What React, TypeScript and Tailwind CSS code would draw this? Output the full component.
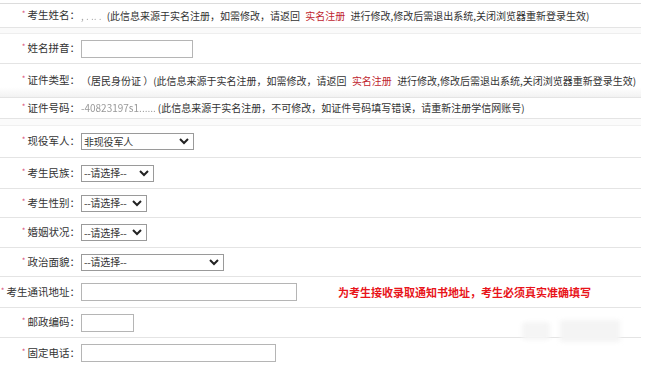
import type { ReactNode } from "react";

const FONT = '"Noto Sans CJK SC", "Noto Sans", sans-serif';

function Star() {
  return <span className="mr-[2px] text-[8px] text-[#d9537a] align-top">*</span>;
}

function Row({
  label,
  children,
  h,
  className = "",
}: {
  label: string;
  children?: ReactNode;
  h: string;
  className?: string;
}) {
  return (
    <div className={`flex items-center border-b border-[#e4e4e4] ${h} ${className}`}>
      <div className="w-[80px] shrink-0 whitespace-nowrap text-right text-[10.5px]">
        <Star />
        {label}：
      </div>
      <div className="flex flex-1 items-center whitespace-nowrap pl-[1px]">{children}</div>
    </div>
  );
}

function Chevron() {
  return (
    <svg viewBox="0 0 10 7" className="h-[7px] w-[10px] shrink-0" aria-hidden>
      <polyline points="1,1 5,5 9,1" fill="none" stroke="#222" strokeWidth="2" />
    </svg>
  );
}

function Select({ w, text }: { w: string; text: string }) {
  return (
    <div
      className={`flex h-[17px] ${w} items-center justify-between border border-[#9a9a9a] bg-white pl-[2px] pr-[4px] text-[10px] text-[#333]`}
    >
      <span className="tracking-[-0.2px]">{text}</span>
      <Chevron />
    </div>
  );
}

function Input({ w }: { w: string }) {
  return <div className={`h-[18px] ${w} border border-[#b5b5b5] bg-white`} />;
}

export default function App() {
  return (
    <div
      className="relative h-[382px] w-[653px] overflow-hidden bg-white text-[10px] leading-none text-[#333]"
      style={{ fontFamily: FONT }}
    >
      <div className="w-[641px] pt-[3px]">
        <div className="border-t border-[#dcdcdc]" />
        <Row label="考生姓名" h="h-[24px]">
          <span className="mr-[5px] text-[#aaa] blur-[0.6px]">, . .. .</span>
          <span>
            (此信息来源于实名注册，如需修改，请返回 <span className="mx-[3px] text-[#c0262f]">实名注册</span>{" "}
            进行修改,修改后需退出系统,关闭浏览器重新登录生效)
          </span>
        </Row>
        <div className="h-[6px] border-b border-[#eeeeee] bg-[#fafafa]" />
        <Row label="姓名拼音" h="h-[30px]">
          <Input w="w-[112px]" />
        </Row>
        <Row label="证件类型" h="h-[34px]" className="bg-gradient-to-b from-white from-70% to-[#f2f2f2]">
          <span>
            （居民身份证 ）(此信息来源于实名注册，如需修改，请返回 <span className="mx-[3px] text-[#c0262f]">实名注册</span>{" "}
            进行修改,修改后需退出系统,关闭浏览器重新登录生效)
          </span>
        </Row>
        <Row label="证件号码" h="h-[21px]">
          <span className="mr-[2px] text-[#999] blur-[0.7px]">-40823197s1......</span>
          <span>(此信息来源于实名注册，不可修改，如证件号码填写错误，请重新注册学信网账号)</span>
        </Row>
        <div className="h-[7px] border-b border-[#f0f0f0] bg-[#fbfbfb]" />
        <Row label="现役军人" h="h-[32px]">
          <Select w="w-[113px]" text="非现役军人" />
        </Row>
        <Row label="考生民族" h="h-[31px]">
          <Select w="w-[73px]" text="--请选择--" />
        </Row>
        <Row label="考生性别" h="h-[29px]">
          <Select w="w-[66px]" text="--请选择--" />
        </Row>
        <Row label="婚姻状况" h="h-[30px]">
          <Select w="w-[66px]" text="--请选择--" />
        </Row>
        <Row label="政治面貌" h="h-[29px]">
          <Select w="w-[143px]" text="--请选择--" />
        </Row>
        <Row label="考生通讯地址" h="h-[31px]">
          <Input w="w-[216px]" />
          <span className="ml-[41px] text-[11px] font-bold text-[#e8141a]">为考生接收录取通知书地址，考生必须真实准确填写</span>
        </Row>
        <Row label="邮政编码" h="h-[30px]">
          <Input w="w-[53px]" />
        </Row>
        <Row label="固定电话" h="h-[30px]" className="border-b-0">
          <Input w="w-[195px]" />
        </Row>
      </div>
      <div className="absolute left-[522px] top-[322px] h-[18px] w-[28px] rounded-sm bg-[#f5f5f5] blur-[2px]" />
      <div className="absolute left-[560px] top-[320px] h-[22px] w-[60px] bg-[#f4f4f4] blur-[2px]" />
    </div>
  );
}
